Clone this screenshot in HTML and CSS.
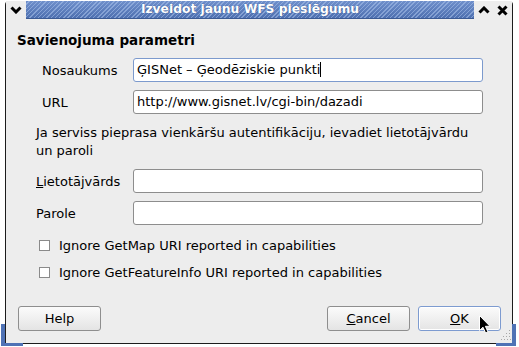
FILE: index.html
```html
<!DOCTYPE html>
<html lang="lv">
<head>
  <meta charset="UTF-8" />
  <title>Izveidot jaunu WFS pieslēgumu</title>
  <link rel="stylesheet" href="styles.css">
</head>
<body>

  <div class="window">
    <div class="titlebar">
      <div class="tb-btn menu">
        <svg width="12" height="8" viewBox="0 0 12 8"><path d="M1.5 1.5 L6 6 L10.5 1.5" fill="none" stroke="#000" stroke-width="3"/></svg>
      </div>
      <div class="title">Izveidot jaunu WFS pieslēgumu</div>
      <div class="tb-btn">
        <svg width="12" height="8" viewBox="0 0 12 8"><path d="M1.5 6.5 L6 2 L10.5 6.5" fill="none" stroke="#000" stroke-width="3"/></svg>
      </div>
      <div class="tb-btn">
        <svg width="11" height="11" viewBox="0 0 11 11"><path d="M1.5 1.5 L9.5 9.5 M9.5 1.5 L1.5 9.5" fill="none" stroke="#000" stroke-width="3"/></svg>
      </div>
    </div>

    <div class="dialog">
      <div class="group-title">Savienojuma parametri</div>

      <div class="section">
        <div class="row">
          <label class="lbl indent">Nosaukums</label>
          <div class="field focused">ĢISNet – Ģeodēziskie punkti<span class="caret"></span></div>
        </div>
        <div class="row">
          <label class="lbl indent">URL</label>
          <div class="field">http://www.gisnet.lv/cgi-bin/dazadi</div>
        </div>

        <p class="note">Ja serviss pieprasa vienkāršu autentifikāciju, ievadiet lietotājvārdu un paroli</p>

        <div class="row">
          <label class="lbl"><u>L</u>ietotājvārds</label>
          <div class="field"></div>
        </div>
        <div class="row">
          <label class="lbl">Parole</label>
          <div class="field"></div>
        </div>

        <div class="check first"><span class="box"></span>Ignore GetMap URI reported in capabilities</div>
        <div class="check"><span class="box"></span>Ignore GetFeatureInfo URI reported in capabilities</div>
      </div>

      <div class="buttons">
        <button class="btn">Help</button>
        <div class="right">
          <button class="btn"><u>C</u>ancel</button>
          <button class="btn default"><u>O</u>K</button>
        </div>
      </div>
    </div>

    <div class="corner bl"></div>
    <div class="corner br"></div>
    <svg class="grip" width="10" height="10" viewBox="0 0 10 10">
      <g fill="#a8a8a8">
        <rect x="8" y="0" width="1" height="1"/>
        <rect x="5" y="3" width="1" height="1"/><rect x="8" y="3" width="1" height="1"/>
        <rect x="2" y="6" width="1" height="1"/><rect x="5" y="6" width="1" height="1"/><rect x="8" y="6" width="1" height="1"/>
        <rect x="0" y="9" width="1" height="1"/><rect x="3" y="9" width="1" height="1"/><rect x="6" y="9" width="1" height="1"/><rect x="9" y="9" width="1" height="1"/>
      </g>
    </svg>
  </div>

  <svg class="cursor" width="13" height="19" viewBox="0 0 13 19">
    <path d="M0.5 0.5 L0.5 15.5 L4 12.2 L6.6 18 L9 17 L6.4 11.3 L11 11.3 Z" fill="#000" stroke="#fff" stroke-width="1"/>
  </svg>

</body>
</html>
```

FILE: styles.css
```css
body {
  margin: 0;
  background: #ffffff;
  font-family: 'DejaVu Sans', sans-serif;
  font-size: 13px;
  color: #000;
  width: 519px;
  height: 347px;
  overflow: hidden;
  position: relative;
}

.window {
  position: relative;
  margin: 1px 0 0 5px;
  width: 508px;
  height: 343px;
  box-sizing: border-box;
  border: 1px solid #1c1c1c;
  border-top: none;
  border-radius: 4px 4px 0 0;
  background: #ededed;
  display: flex;
  flex-direction: column;
}

/* title bar */
.titlebar {
  display: flex;
  height: 18px;
  flex-shrink: 0;
}

.tb-btn {
  width: 19px;
  display: flex;
  align-items: center;
  justify-content: center;
  background: #ededed;
}

.tb-btn.menu {
  width: 20px;
}

.title {
  flex: 1;
  color: #fff;
  font-weight: bold;
  font-size: 12.3px;
  line-height: 17px;
  text-align: center;
  text-shadow: 0 0 1px #2c4a80;
  border-bottom: 1px solid #3b5a94;
  background:
    repeating-linear-gradient(135deg, rgba(255,255,255,0) 0, rgba(255,255,255,0) 2px, rgba(170,195,235,0.55) 2px, rgba(170,195,235,0.55) 3px),
    linear-gradient(#6f8fcb, #4e70b0);
}

/* dialog body */
.dialog {
  flex: 1;
  padding: 13px 11px 0 11px;
  display: flex;
  flex-direction: column;
}

.group-title {
  font-weight: bold;
  font-size: 13.5px;
  line-height: 16px;
  margin-bottom: 10px;
}

.section {
  padding-left: 19px;
  padding-right: 18px;
}

.row {
  display: flex;
  align-items: center;
  height: 24px;
  margin-bottom: 8px;
}

.lbl {
  width: 97px;
  flex-shrink: 0;
}

.lbl.indent {
  padding-left: 6px;
  box-sizing: border-box;
}

.field {
  flex: 1;
  height: 24px;
  box-sizing: border-box;
  border: 1px solid #8d8d8d;
  border-radius: 3px;
  background: #fff;
  padding-left: 3px;
  line-height: 22px;
  white-space: nowrap;
}

.field.focused {
  border-color: #7c9acd;
}

.caret {
  display: inline-block;
  width: 1px;
  height: 15px;
  background: #000;
  vertical-align: -3px;
}

.note {
  margin: 10px 0 9px 0;
  line-height: 18px;
}

.check {
  display: flex;
  align-items: center;
  height: 27px;
  padding-left: 3px;
}

.check.first {
  margin-top: -1px;
}

.box {
  width: 11px;
  height: 11px;
  box-sizing: border-box;
  border: 1px solid #8a8a8a;
  background: #fff;
  margin-right: 9px;
}

/* buttons */
.buttons {
  display: flex;
  justify-content: space-between;
  margin-top: 20px;
  padding: 0 0 0 1px;
}

.right {
  display: flex;
  gap: 8px;
}

.btn {
  width: 83px;
  height: 25px;
  font-family: 'DejaVu Sans', sans-serif;
  font-size: 13px;
  color: #000;
  border: 1px solid #8e8e8e;
  border-radius: 3px;
  background: linear-gradient(#fbfbfb, #e4e4e4);
  padding: 0;
}

.btn.default {
  border-color: #7d9bd0;
  box-shadow: inset 0 0 0 1px #fff;
}

/* window frame decorations */
.corner.bl {
  position: absolute;
  left: -5px;
  bottom: -3px;
  width: 22px;
  height: 22px;
  border-left: 4px solid #4f72b5;
  border-bottom: 3px solid #4f72b5;
  box-sizing: border-box;
}

.corner.br {
  position: absolute;
  right: -4px;
  bottom: -3px;
  width: 20px;
  height: 22px;
  border-right: 4px solid #4f72b5;
  border-bottom: 3px solid #4f72b5;
  box-sizing: border-box;
}

.grip {
  position: absolute;
  right: 1px;
  bottom: 3px;
}

.cursor {
  position: absolute;
  left: 479px;
  top: 315px;
}
```
